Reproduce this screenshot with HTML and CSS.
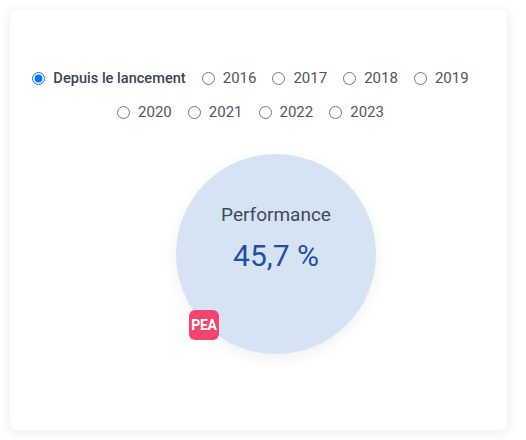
FILE: index.html
```html
<!DOCTYPE html>
<html lang="fr">
<head>
<meta charset="utf-8">
<link rel="stylesheet" href="styles.css">
</head>
<body>
<div class="card">
  <div class="periods">
    <label class="period period--active"><input type="radio" name="p" checked><span>Depuis le lancement</span></label>
    <label class="period"><input type="radio" name="p"><span>2016</span></label>
    <label class="period"><input type="radio" name="p"><span>2017</span></label>
    <label class="period"><input type="radio" name="p"><span>2018</span></label>
    <label class="period"><input type="radio" name="p"><span>2019</span></label>
    <label class="period"><input type="radio" name="p"><span>2020</span></label>
    <label class="period"><input type="radio" name="p"><span>2021</span></label>
    <label class="period"><input type="radio" name="p"><span>2022</span></label>
    <label class="period"><input type="radio" name="p"><span>2023</span></label>
  </div>
  <div class="chart">
    <div class="bubble">
      <div class="bubble-label">Performance</div>
      <div class="bubble-value">45,7 %</div>
      <div class="badge">PEA</div>
    </div>
  </div>
</div>
</body>
</html>
```
FILE: styles.css
```css
html, body {
  margin: 0;
  background: #ffffff;
}
body {
  padding: 10px 19px 10px 10px;
  font-family: Roboto, "Noto Sans", sans-serif;
}
.card {
  height: 420px;
  box-sizing: border-box;
  background: #ffffff;
  border-radius: 6px;
  box-shadow: 0 2px 12px rgba(40, 40, 60, 0.10);
  padding-top: 51px;
}
.periods {
  display: flex;
  flex-wrap: wrap;
  justify-content: center;
  padding: 0 6px;
}
.period {
  display: flex;
  align-items: center;
  height: 34px;
  margin-right: 16px;
  font-size: 15px;
  color: #51565d;
}
.period input {
  width: 13px;
  height: 13px;
  margin: 0 8px 0 0;
}
.period--active {
  font-weight: 500;
  font-size: 14.6px;
  color: #3d4451;
}
.chart {
  display: flex;
  justify-content: center;
  padding-left: 35px;
  margin-top: 25px;
}
.bubble {
  position: relative;
  width: 200px;
  height: 200px;
  border-radius: 50%;
  background: #d6e3f3;
  box-shadow: 0 4px 14px rgba(60, 70, 100, 0.08);
  display: flex;
  flex-direction: column;
  align-items: center;
  padding-top: 48px;
  box-sizing: border-box;
}
.bubble-label {
  font-size: 19px;
  color: #3e4a5e;
  line-height: 26px;
}
.bubble-value {
  font-size: 30px;
  color: #1f4ea6;
  line-height: 40px;
  margin-top: 8px;
}
.badge {
  position: absolute;
  left: 13px;
  top: 156px;
  width: 30px;
  height: 30px;
  border-radius: 6px;
  background: repeating-linear-gradient(135deg, #f2416a 0 3px, #ef4a6e 3px 6px);
  color: #ffffff;
  font-weight: 700;
  font-size: 14px;
  display: flex;
  align-items: center;
  justify-content: center;
  letter-spacing: -0.3px;
}
```
